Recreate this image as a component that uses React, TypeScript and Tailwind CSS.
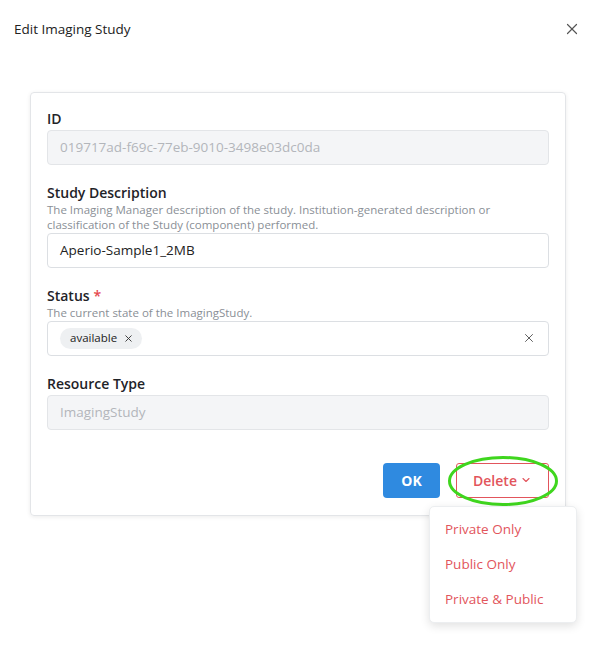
import { X, ChevronDown } from 'lucide-react';

function Field({ label, required, help, children }: { label: string; required?: boolean; help?: string[]; children: React.ReactNode }) {
  return (
    <div>
      <div className="text-[14px] leading-[20px] font-semibold text-[#1f2328]">
        {label}
        {required && <span className="text-[#e5484d] ml-1">*</span>}
      </div>
      {help && (
        <div className="text-[11.5px] leading-[14.5px] text-[#8a8f96]">
          {help.map((h) => (
            <div key={h}>{h}</div>
          ))}
        </div>
      )}
      <div className={help ? 'mt-[0.5px]' : 'mt-[1px]'}>{children}</div>
    </div>
  );
}

export default function App() {
  return (
    <div className="relative w-full h-[671px] bg-white text-[#1f2328]" style={{ fontFamily: '"Open Sans", "Noto Sans", sans-serif' }}>
      {/* Header */}
      <div className="flex items-center justify-between pl-[14px] pr-[17px] pt-[19px]">
        <h2 className="text-[13.5px] leading-[20px] text-[#222]">Edit Imaging Study</h2>
        <X className="w-[18px] h-[18px] text-[#555]" strokeWidth={1.6} />
      </div>

      {/* Card */}
      <div className="ml-[30px] mr-[32px] mt-[53px] border border-[#e3e5e8] rounded-[4px] shadow-[0_1px_4px_rgba(0,0,0,0.08)] px-[16px] pt-[16px] pb-[17px]">
        <div className="flex flex-col gap-[18px]">
          <Field label="ID">
            <div className="h-[35px] rounded-[4px] border border-[#e3e5e8] bg-[#f4f5f7] px-[12px] flex items-center text-[13.5px] text-[#b3b6bb]">
              019717ad-f69c-77eb-9010-3498e03dc0da
            </div>
          </Field>

          <Field
            label="Study Description"
            help={[
              'The Imaging Manager description of the study. Institution-generated description or',
              'classification of the Study (component) performed.',
            ]}
          >
            <div className="h-[35px] rounded-[4px] border border-[#dcdfe3] bg-white px-[12px] flex items-center text-[13.5px] text-[#222]">
              Aperio-Sample1_2MB
            </div>
          </Field>

          <Field label="Status" required help={['The current state of the ImagingStudy.']}>
            <div className="h-[35px] rounded-[4px] border border-[#dcdfe3] bg-white pl-[12px] pr-[12px] flex items-center justify-between">
              <span className="inline-flex items-center gap-[6px] h-[21px] rounded-full bg-[#eef0f2] pl-[10px] pr-[8px] text-[11.5px] text-[#222]">
                available
                <X className="w-[11px] h-[11px] text-[#333]" strokeWidth={2} />
              </span>
              <X className="w-[14px] h-[14px] text-[#555]" strokeWidth={1.6} />
            </div>
          </Field>

          <Field label="Resource Type">
            <div className="h-[35px] rounded-[4px] border border-[#e3e5e8] bg-[#f4f5f7] px-[12px] flex items-center text-[13.5px] text-[#b3b6bb]">
              ImagingStudy
            </div>
          </Field>
        </div>

        <div className="flex justify-end gap-[16px] mt-[33px]">
          <button className="h-[35px] w-[57px] rounded-[4px] bg-[#2f8ae0] text-white text-[14px] font-bold">OK</button>
          <div className="relative">
            <button className="h-[35px] w-[93px] rounded-[3px] border border-[#e2555c] bg-white text-[#e2555c] text-[14px] font-semibold flex items-center justify-center gap-[3px]">
              Delete
              <ChevronDown className="w-[12px] h-[12px]" strokeWidth={2.2} />
            </button>
            <svg className="absolute left-[-9px] top-[-8px] pointer-events-none" width="112" height="52" viewBox="0 0 112 52">
              <ellipse cx="56" cy="26" rx="53.5" ry="23.5" fill="none" stroke="#3fd61e" strokeWidth="3" />
            </svg>
          </div>
        </div>
      </div>

      {/* Dropdown */}
      <div className="absolute left-[429px] top-[506px] w-[148px] rounded-[5px] bg-white border border-[#eceef0] shadow-[0_3px_10px_rgba(0,0,0,0.12)] py-[5px]">
        {['Private Only', 'Public Only', 'Private & Public'].map((t) => (
          <div key={t} className="h-[35px] flex items-center px-[15px] text-[13.5px] text-[#e2555c]">
            {t}
          </div>
        ))}
      </div>
    </div>
  );
}
